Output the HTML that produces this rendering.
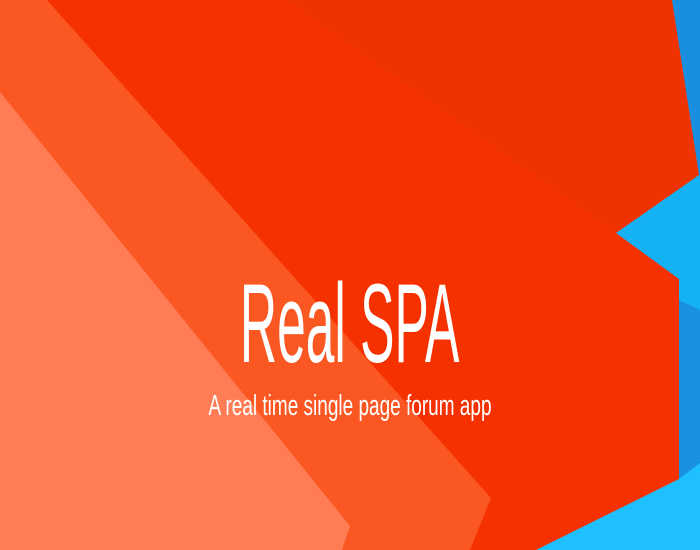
<!DOCTYPE html>
<html><head><style>
html,body{margin:0;padding:0;width:700px;height:550px;overflow:hidden;background:#f63100;}
svg{position:absolute;left:0;top:0}
.t{position:absolute;left:0;width:700px;text-align:center;color:#fff;font-family:"Liberation Sans",sans-serif;white-space:nowrap}
.t span{display:inline-block}
</style></head><body>
<svg width="700" height="550" viewBox="0 0 700 550">
<rect width="700" height="550" fill="#f63100"/>
<polygon points="286,0 672,0 699,175 616,233" fill="#ee3300"/>
<polygon points="672,0 700,0 700,175 699,175" fill="#1a8fe0"/>
<polygon points="616,233 699,175 700,175 700,463 679,479 679,279" fill="#14b2f4"/>
<polygon points="679,300 700,310 700,465 679,479" fill="#1a90e0"/>
<polygon points="536,550 679,479 700,463 700,550" fill="#1ec0ff"/>
<polygon points="0,0 47,0 491,498 470,550 0,550" fill="#fb5722"/>
<polygon points="0,92 350,526 342,550 0,550" fill="#ff7c54"/>
</svg>
<div class="t" style="top:268px;font-size:112px;line-height:112px;"><span style="transform:scaleX(0.46);font-weight:300">Real SPA</span></div>
<div class="t" style="top:390px;font-size:29px;line-height:32px;"><span style="transform:scaleX(0.655)">A real time single page forum app</span></div>
</body></html>
